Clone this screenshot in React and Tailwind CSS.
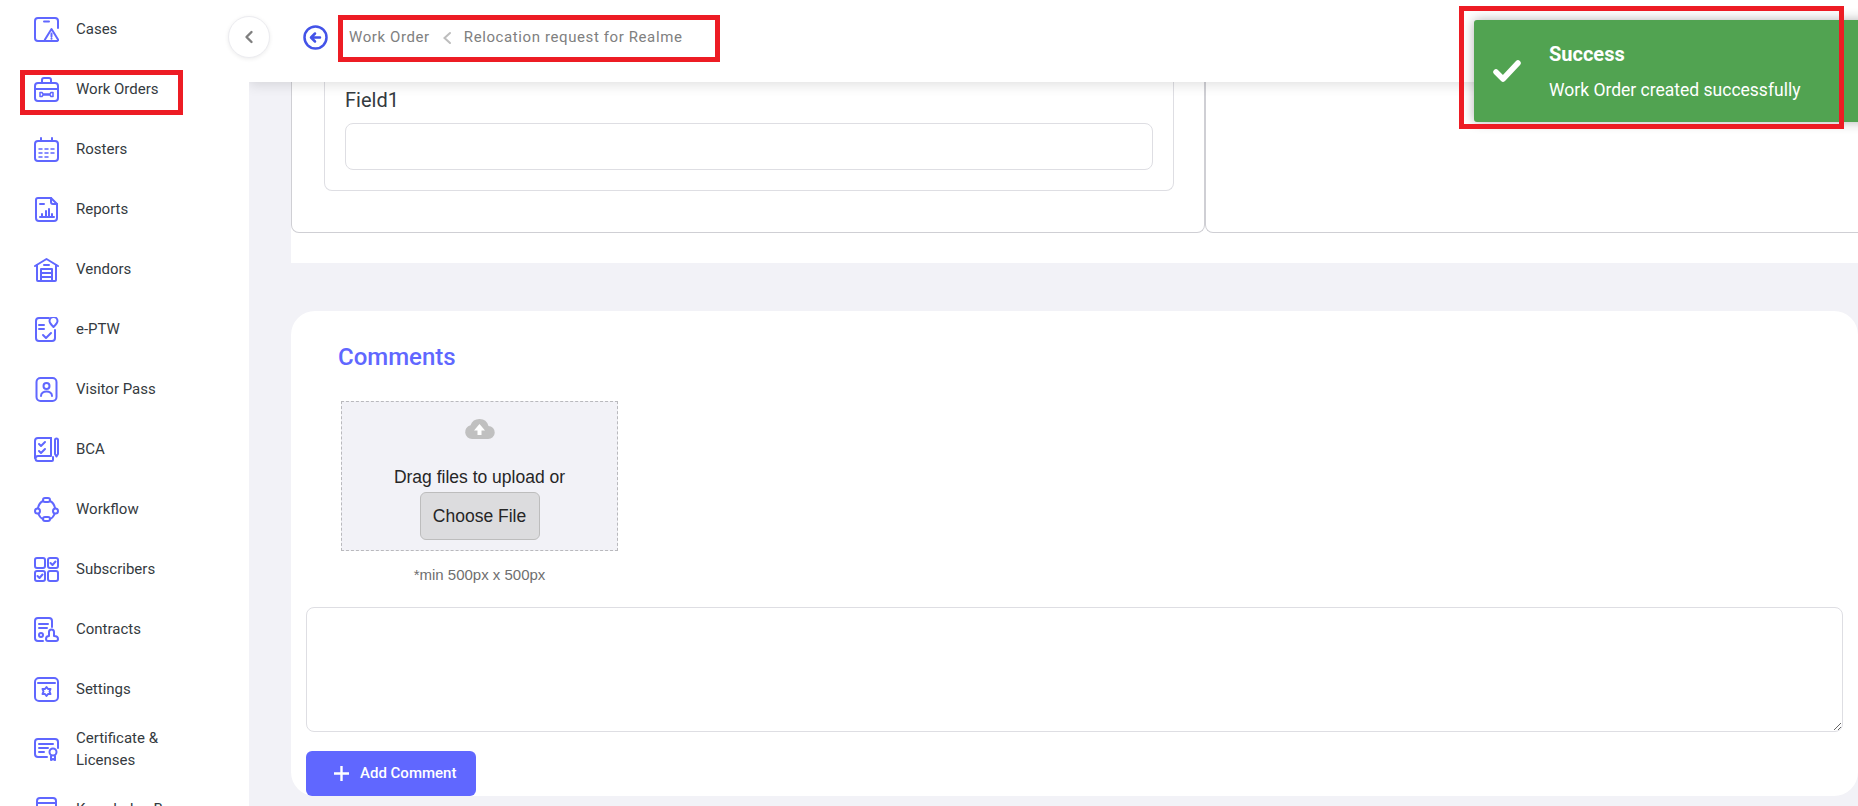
const B = "#6067ff";

function Ico({ children, w = 25 }) {
  return (
    <svg width={w} height={w} viewBox="0 0 25 25" fill="none" stroke={B} strokeWidth="2" strokeLinecap="round" strokeLinejoin="round" className="shrink-0">
      {children}
    </svg>
  );
}

const icons = {
  cases: <Ico><path d="M11 24H4a3 3 0 0 1-3-3V4a3 3 0 0 1 3-3h17a3 3 0 0 1 3 3v7" /><path d="M10 4.500h5" /><path d="M17.500 12 24 22.500a1 1 0 0 1-1 1.500H12a1 1 0 0 1-1-1.500z" /><path d="M17.500 16.500v3M17.500 21.500v.2" /></Ico>,
  work: <Ico><rect x="1" y="6" width="23" height="18" rx="3" /><path d="M8 6V3a2 2 0 0 1 2-2h5a2 2 0 0 1 2 2v3" /><path d="M1 12h23" /><path d="M6 15.500h2l1 1.500h7l1-1.500h2v4h-2l-1-1.500H9l-1 1.500H6z" strokeWidth="1.500" /></Ico>,
  rosters: <Ico><rect x="1" y="4" width="23" height="20" rx="3" /><path d="M7 1v3M18 1v3" /><path d="M5 12h3M11 12h3M17 12h3M5 16h3M11 16h3M17 16h3M5 20h3M11 20h3" strokeWidth="1.500" /></Ico>,
  reports: <Ico><path d="M4 1h13l6 6v14a3 3 0 0 1-3 3H5a3 3 0 0 1-3-3V3a2 2 0 0 1 2-2z" /><path d="M17 1v4a2 2 0 0 0 2 2h4" /><path d="M6 7h4M6 20h14M8 20v-3M12 20v-6M15 20v-8M18 20v-3" /></Ico>,
  vendors: <Ico><path d="M1 9 12.500 2 24 9" /><path d="M3 8v15a1 1 0 0 0 1 1h17a1 1 0 0 0 1-1V8" /><rect x="7" y="12" width="11" height="12" /><path d="M7 16h11M7 20h11M10 8h5" /></Ico>,
  eptw: <Ico><path d="M15 1H5a3 3 0 0 0-3 3v17a3 3 0 0 0 3 3h13a3 3 0 0 0 3-3v-8" /><path d="M5 8h5M5 12h5" /><path d="M9 18l3 3 5-5" /><path d="M19.500 10c-2-2-4-4-4-6a4 4 0 0 1 8 0c0 2-2 4-4 6z" /></Ico>,
  visitor: <Ico><rect x="2.500" y="1" width="20" height="23" rx="4" /><circle cx="12.500" cy="9" r="3" /><path d="M7 19c0-6 11-6 11 0" /></Ico>,
  bca: <Ico><path d="M17 1H4a3 3 0 0 0-3 3v17" /><path d="M17 1v18H4a2.500 2.500 0 0 0 0 5h14a1 1 0 0 0 1-1v-3" /><path d="M5 7l2 2 4-4M5 14l2 2 4-4" /><path d="M21 3a1.500 1.500 0 0 1 3 0v14l-1.500 2.500L21 17z" /></Ico>,
  workflow: <Ico><rect x="9" y="1" width="7" height="4" rx="2" /><circle cx="3.500" cy="14" r="2.500" /><circle cx="21.500" cy="14" r="2.500" /><rect x="9" y="20" width="7" height="4" rx="2" /><path d="M9 4Q5 6 4 11M16 4q4 2 5 7M4.500 17Q6 21 9 22M20.500 17q-1.500 4-4.500 5" /></Ico>,
  subs: <Ico><rect x="1" y="1" width="10" height="10" rx="2" /><rect x="14" y="1" width="10" height="10" rx="2" /><rect x="1" y="14" width="10" height="10" rx="2" /><rect x="14" y="14" width="10" height="10" rx="2" /><path d="M16.500 6l2 2 3-3.500M3.500 19l2 2 3-3.500" /></Ico>,
  contracts: <Ico><path d="M9 24H4a3 3 0 0 1-3-3V4a3 3 0 0 1 3-3h11a3 3 0 0 1 3 3v6" /><path d="M5 7h9M5 11h8" /><circle cx="7" cy="18" r="2" /><path d="M15 24h7a2 2 0 0 0 2-2c0-2-2-3-4-3v-4a2.500 2.500 0 0 0-5 0v4c-2 0-3 1-3 3a2 2 0 0 0 2 2h1z" /></Ico>,
  settings: <Ico><rect x="1" y="1" width="23" height="23" rx="4" /><path d="M4 6h17" /><path d="M12.500 10l1.500 2h2.500l-1 2.500 1 2.500H14l-1.500 2-1.500-2H8.500l1-2.500-1-2.500H11z" /></Ico>,
  cert: <Ico><path d="M13 20H4a3 3 0 0 1-3-3V5a3 3 0 0 1 3-3h17a3 3 0 0 1 3 3v6" /><path d="M5 7h14M5 11h9M5 15h5" /><circle cx="19" cy="15" r="3.500" /><path d="M17 19v4l2-1 2 1v-4" /></Ico>,
  know: <Ico><rect x="3" y="1" width="19" height="23" rx="3" /><path d="M3 6h19" /><path d="M10 11l6 4-6 4z" /></Ico>,
};

const items = [
  ["cases", "Cases"],
  ["work", "Work Orders"],
  ["rosters", "Rosters"],
  ["reports", "Reports"],
  ["vendors", "Vendors"],
  ["eptw", "e-PTW"],
  ["visitor", "Visitor Pass"],
  ["bca", "BCA"],
  ["workflow", "Workflow"],
  ["subs", "Subscribers"],
  ["contracts", "Contracts"],
  ["settings", "Settings"],
  ["cert", "Certificate & Licenses"],
  ["know", "Knowledge Base"],
];

function Annot({ className }) {
  return <div className={"absolute border-[5px] border-[#ed1c24] pointer-events-none z-30 " + className} />;
}

export default function App() {
  return (
    <div className="relative flex h-[806px] w-[1858px] overflow-hidden bg-[#f2f2f7] font-['Roboto',sans-serif]">
      <aside className="relative z-20 w-[249px] shrink-0 bg-white overflow-hidden">
        <ul className="-mt-px">
          {items.map(([k, label]) => (
            <li key={k} className="flex h-[60px] items-center pl-[34px] gap-[17px]">
              {icons[k]}
              <span className="w-[125px] text-[15px] leading-[22px] text-[#343a40]">{label}</span>
            </li>
          ))}
        </ul>
      </aside>

      <button className="absolute left-[228px] top-[16px] z-20 flex h-[42px] w-[42px] items-center justify-center rounded-full border border-[#ececf0] bg-white shadow-[0_1px_4px_rgba(0,0,0,0.08)]">
        <svg width="12" height="14" viewBox="0 0 12 14" fill="none" stroke="#7f7f7f" strokeWidth="2.400" strokeLinecap="round" strokeLinejoin="round"><path d="M8.500 2 3.500 7l5 5" /></svg>
      </button>

      <main className="flex min-w-0 flex-1 flex-col">
        <header className="relative z-10 flex h-[82px] shrink-0 items-start bg-white pl-[54px] pt-[25px] shadow-[0_3px_12px_rgba(0,0,0,0.12)]">
          <svg width="25" height="25" viewBox="0 0 25 25" fill="none" stroke="#4353e8" strokeWidth="2.500" strokeLinecap="round" strokeLinejoin="round">
            <circle cx="12.500" cy="12.500" r="11" />
            <path d="M17 12.500H9M12 8.500l-4 4 4 4" />
          </svg>
          <nav className="ml-[21px] flex h-[25px] items-center text-[15px] tracking-[0.6px] text-[#808080]">
            <span>Work Order</span>
            <svg className="mx-[12px]" width="10" height="14" viewBox="0 0 10 14" fill="none" stroke="#bdbdbd" strokeWidth="2" strokeLinecap="round"><path d="M8 2 2.500 7 8 12" /></svg>
            <span>Relocation request for Realme</span>
          </nav>
        </header>

        <div className="flex-1 pl-[42px]">
          <section className="flex h-[181px] bg-white">
            <div className="w-[914px] rounded-bl-[8px] rounded-br-[8px] border-x border-b border-[#cfcfd4] h-[151px] pl-[32px] pr-[30px]">
              <div className="h-[109px] rounded-b-[8px] border-x border-b border-[#dedee3] px-[20px]">
                <label className="block pt-[7px] text-[20px] leading-[22px] text-[#343a40]">Field1</label>
                <div className="mt-[12px] h-[47px] rounded-[8px] border border-[#dedee3] bg-white" />
              </div>
            </div>
            <div className="flex-1 h-[151px] rounded-bl-[8px] border-l border-b border-[#cfcfd4]" />
          </section>

          <section className="mt-[48px] flex h-[485px] flex-col rounded-[24px] bg-white">
            <h2 className="pl-[47px] pt-[31px] text-[24px] font-medium leading-[30px] text-[#6067ff]">Comments</h2>
            <div className="ml-[50px] mt-[29px] flex h-[151px] w-[277px] flex-col items-center border border-dashed border-[#b9b9bd] bg-[#f2f2f7] font-['Liberation_Sans',Arial,sans-serif]">
              <svg className="mt-[16px]" width="31" height="22" viewBox="0 0 31 22"><path fill="#c0c0c0" d="M8 21a7 7 0 0 1-1.500-13.800A9.500 9.500 0 0 1 24.500 8 6.500 6.500 0 0 1 24 21z" /><path fill="#ffffff" d="M15.500 6 21 12.500h-3.500V17h-4v-4.500H10z" /></svg>
              <p className="mt-[27px] text-[17.5px] leading-[20px] text-[#262626]">Drag files to upload or</p>
              <button className="mt-[5px] h-[48px] w-[120px] rounded-[6px] border border-[#bdbdbd] bg-[#dcdcde] text-[17.5px] text-[#262626]">Choose File</button>
            </div>
            <p className="ml-[50px] mt-[15px] w-[277px] text-center font-['Liberation_Sans',Arial,sans-serif] text-[15px] leading-[18px] text-[#6f6f6f]">*min 500px x 500px</p>
            <textarea className="ml-[15px] mt-[23px] h-[125px] w-[1537px] shrink-0 rounded-[8px] border border-[#dedee3] bg-white outline-none" />
            <button className="ml-[15px] mt-[19px] flex h-[45px] w-[170px] shrink-0 items-center rounded-[6px] bg-[#6067ff] pl-[27px] text-[15px] font-medium text-white">
              <svg width="17" height="17" viewBox="0 0 17 17" fill="none" stroke="#fff" strokeWidth="2.400"><path d="M8.500 1v15M1 8.500h15" /></svg>
              <span className="ml-[10px]">Add Comment</span>
            </button>
          </section>
        </div>
      </main>

      <div className="absolute left-[1474px] top-[20px] z-20 flex h-[102px] w-[400px] items-center rounded-[3px] bg-[#51a351] shadow-[0_0_12px_rgba(0,0,0,0.3)]">
        <svg className="ml-[17px]" width="32" height="32" viewBox="0 0 32 32" fill="none" stroke="#fff" strokeWidth="5.500" strokeLinecap="round" strokeLinejoin="round"><path d="M5 17l7 7L27 8" /></svg>
        <div className="ml-[26px] text-white">
          <div className="text-[20px] font-bold leading-[22px]">Success</div>
          <div className="mt-[15px] text-[17.5px] leading-[20px]">Work Order created successfully</div>
        </div>
      </div>

      <Annot className="left-[20px] top-[70px] h-[45px] w-[163px]" />
      <Annot className="left-[338px] top-[15px] h-[47px] w-[382px]" />
      <Annot className="left-[1459px] top-[6px] h-[123px] w-[385px]" />
    </div>
  );
}
